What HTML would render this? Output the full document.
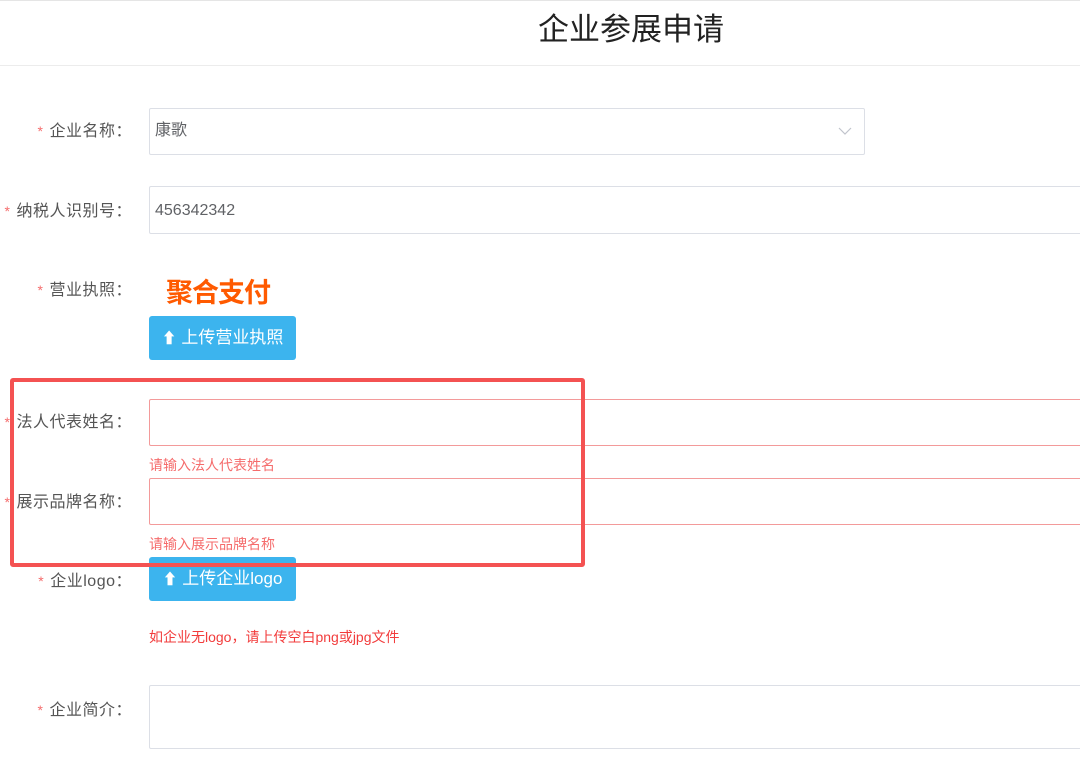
<!DOCTYPE html>
<html><head><meta charset="utf-8"><style>
body{margin:0;width:1080px;height:767px;overflow:hidden;background:#fff;font-family:"Liberation Sans","Noto Sans CJK SC",sans-serif;position:relative}
.a{position:absolute}
.lab{position:absolute;right:948px;font-size:16px;color:#555;white-space:nowrap;line-height:20px;letter-spacing:0.5px}
.lab i{font-style:normal;color:#f56c6c;margin-right:6px;font-size:14px}
.inp{position:absolute;left:149px;border:1px solid #dcdfe6;box-sizing:border-box;border-radius:2px}
.err{border-color:#f39a9a}
.btn{position:absolute;left:149px;width:147px;height:44px;background:#3cb4ee;border-radius:3px;color:#fff;font-size:17px;line-height:44px;text-align:center}
.msg{position:absolute;left:149px;font-size:14px;color:#f56c6c;line-height:18px}
.val{position:absolute;left:155px;font-size:16px;color:#606266;line-height:20px}
</style></head><body>
<div class="a" style="left:0;top:0;width:1080px;height:1px;background:#e5e5e5"></div>
<div class="a" style="left:0;top:65px;width:1080px;height:1px;background:#ececec"></div>
<div class="a" style="left:538px;top:10px;font-size:31px;color:#222;line-height:40px">企业参展申请</div>

<div class="lab" style="top:121px"><i>*</i>企业名称：</div>
<div class="inp" style="top:108px;width:716px;height:47px"></div>
<div class="val" style="top:121px">康歌</div>
<svg class="a" style="left:838px;top:126px" width="14" height="10"><path d="M1 2 L7 8 L13 2" stroke="#c0c4cc" fill="none" stroke-width="1.2"/></svg>

<div class="lab" style="top:201px"><i>*</i>纳税人识别号：</div>
<div class="inp" style="top:186px;width:940px;height:48px"></div>
<div class="val" style="top:201px">456342342</div>

<div class="lab" style="top:280px"><i>*</i>营业执照：</div>
<div class="a" style="left:166px;top:276px;font-size:27px;font-weight:bold;color:#ff5a00;line-height:34px;letter-spacing:-1px">聚合支付</div>
<div class="btn" style="top:316px"><span style="font-size:15px">⬆</span> 上传营业执照</div>

<div class="lab" style="top:412px"><i>*</i>法人代表姓名：</div>
<div class="inp err" style="top:399px;width:940px;height:47px"></div>
<div class="msg" style="top:456px">请输入法人代表姓名</div>

<div class="lab" style="top:492px"><i>*</i>展示品牌名称：</div>
<div class="inp err" style="top:478px;width:940px;height:47px"></div>
<div class="msg" style="top:535px">请输入展示品牌名称</div>

<div class="btn" style="top:557px"><span style="font-size:15px">⬆</span> 上传企业logo</div>
<div class="lab" style="top:571px"><i>*</i>企业logo：</div>
<div class="msg" style="top:628px;color:#f23c3c">如企业无logo，请上传空白png或jpg文件</div>

<div class="lab" style="top:700px"><i>*</i>企业简介：</div>
<div class="inp" style="top:685px;width:940px;height:64px"></div>

<div class="a" style="left:10px;top:378px;width:575px;height:189px;border:4px solid #f45252;box-sizing:border-box;border-radius:3px"></div>
</body></html>
